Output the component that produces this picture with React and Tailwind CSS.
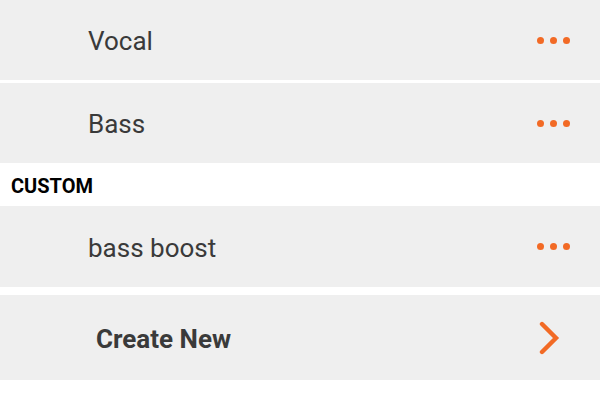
const ORANGE = "#f26a25";

function Dots() {
  return (
    <div className="flex items-center gap-[6px] pr-[30px]">
      <span className="block w-[7px] h-[7px] rounded-full bg-[#f26a25]" />
      <span className="block w-[7px] h-[7px] rounded-full bg-[#f26a25]" />
      <span className="block w-[7px] h-[7px] rounded-full bg-[#f26a25]" />
    </div>
  );
}

function PresetRow({ name, className = "" }) {
  return (
    <div className={`flex items-center justify-between bg-[#efefef] ${className}`}>
      <span className="pl-[88px] pt-[3px] text-[26px] text-[#3a3a3a]">{name}</span>
      <Dots />
    </div>
  );
}

export default function App() {
  return (
    <div
      className="w-[600px] h-[403px] bg-white overflow-hidden flex flex-col"
      style={{ fontFamily: "Roboto, 'Liberation Sans', sans-serif" }}
    >
      <PresetRow name="Vocal" className="h-[80px]" />
      <PresetRow name="Bass" className="h-[80px] mt-[3px]" />
      <div className="h-[43px] flex items-center pl-[11px] pt-[2px]">
        <span className="text-[20px] font-bold text-black leading-none">CUSTOM</span>
      </div>
      <PresetRow name="bass boost" className="h-[81px]" />
      <div className="mt-[8px] h-[85px] flex items-center justify-between bg-[#efefef]">
        <span className="pl-[96px] pt-[3px] text-[26px] font-bold text-[#3a3a3a]">Create New</span>
        <svg width="22" height="34" viewBox="0 0 22 34" className="mr-[39px]">
          <polyline
            points="3,3 17,17 3,31"
            fill="none"
            stroke={ORANGE}
            strokeWidth="4.4"
            strokeLinecap="round"
            strokeLinejoin="miter"
          />
        </svg>
      </div>
    </div>
  );
}
